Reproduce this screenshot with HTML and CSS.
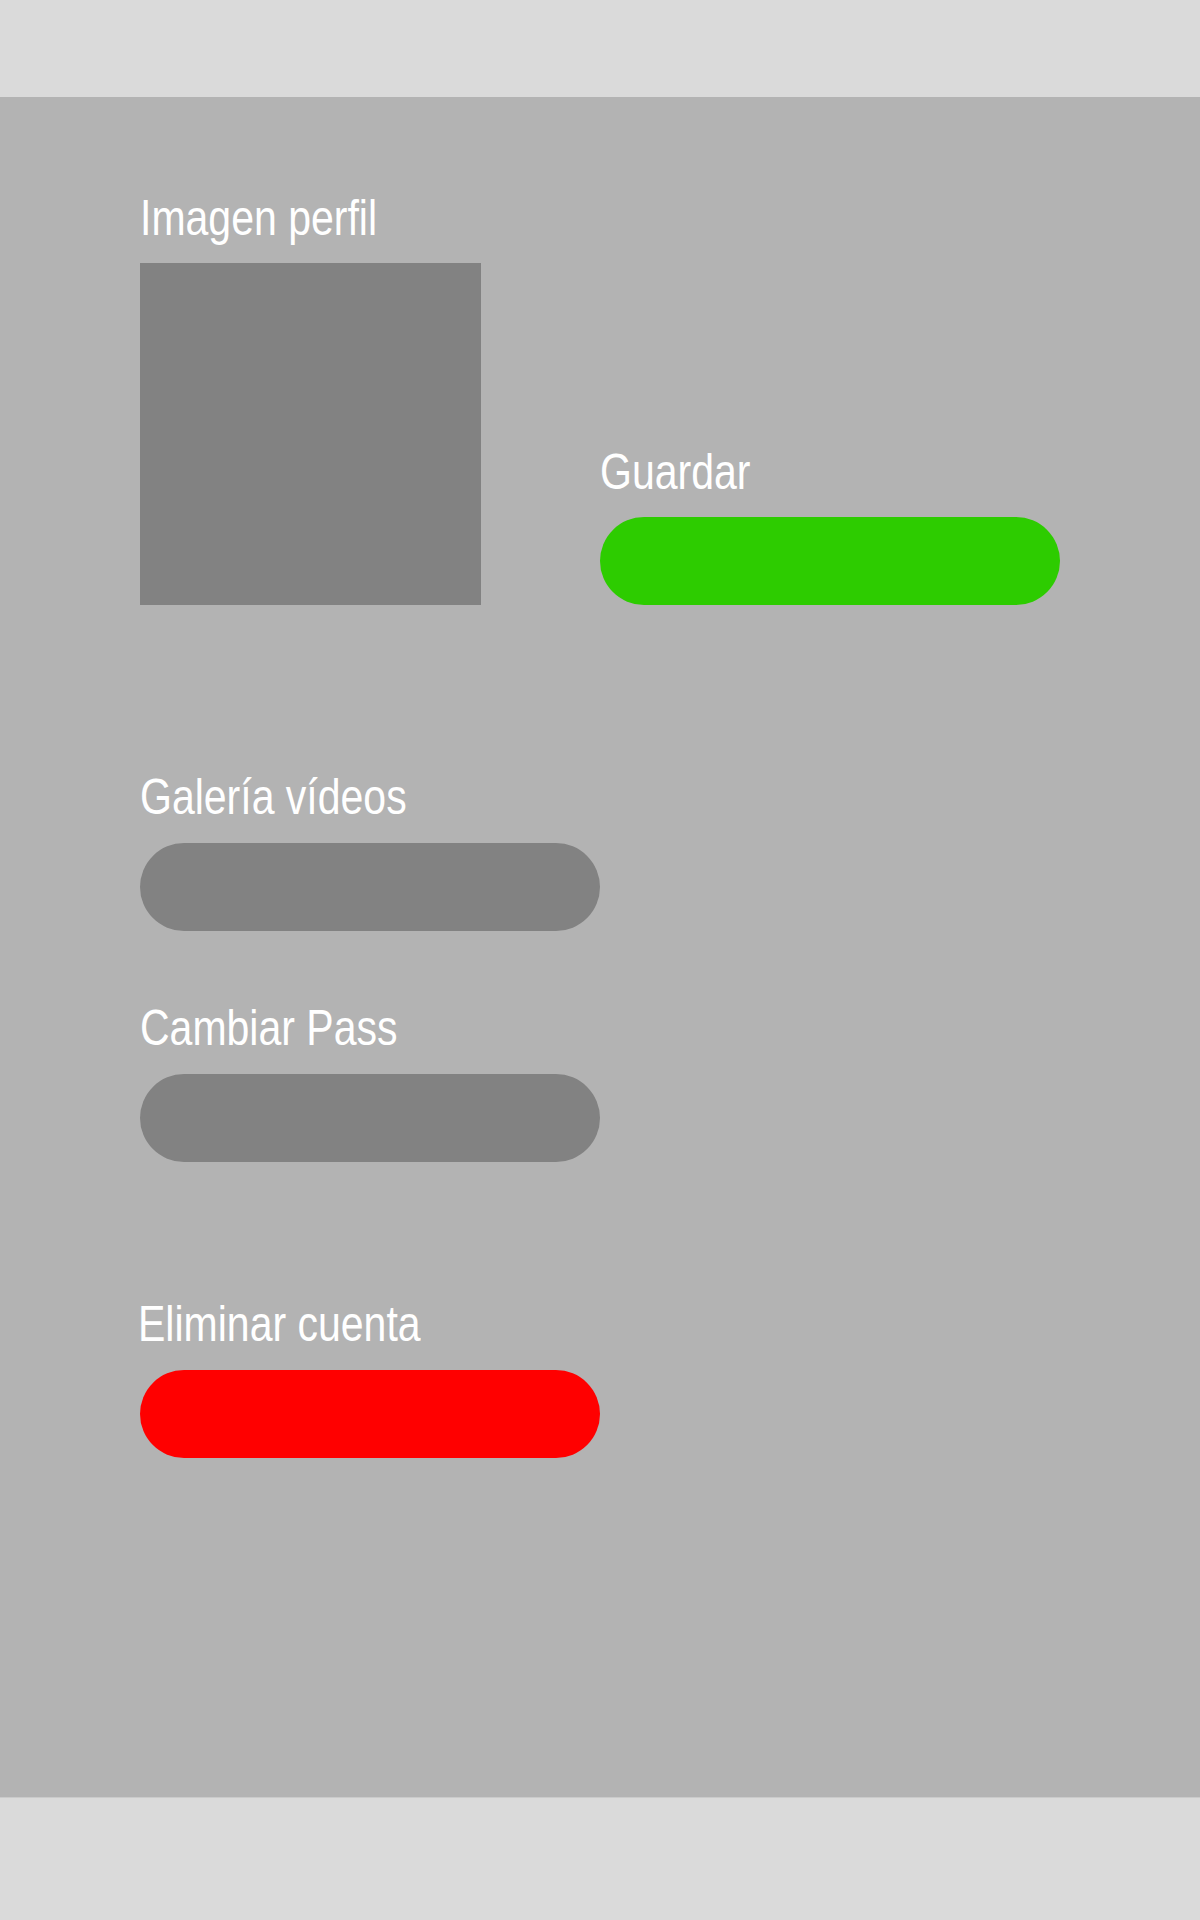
FILE: index.html
```html
<!DOCTYPE html>
<html lang="es">
<head>
<meta charset="utf-8">
<title>Perfil</title>
<link rel="stylesheet" href="styles.css">
</head>
<body>
<header class="topbar"></header>
<main class="content">
  <section class="row-top">
    <div class="field">
      <div class="label">Imagen perfil</div>
      <div class="avatar"></div>
    </div>
    <div class="field">
      <div class="label">Guardar</div>
      <button class="pill pill-save" type="button"></button>
    </div>
  </section>
  <section class="field field-gallery">
    <div class="label">Galería vídeos</div>
    <button class="pill pill-gray" type="button"></button>
  </section>
  <section class="field field-pass">
    <div class="label">Cambiar Pass</div>
    <button class="pill pill-gray" type="button"></button>
  </section>
  <section class="field field-delete">
    <div class="label label-delete">Eliminar cuenta</div>
    <button class="pill pill-delete" type="button"></button>
  </section>
</main>
<footer class="bottombar"></footer>
</body>
</html>
```

FILE: styles.css
```css
html, body {
  margin: 0;
  padding: 0;
}
body {
  width: 1200px;
  height: 1920px;
  display: flex;
  flex-direction: column;
  font-family: "Liberation Sans Narrow", "Arial Narrow", "Liberation Sans", Arial, sans-serif;
  background: #dadada;
}
.topbar {
  height: 97px;
  background: #dadada;
  flex: none;
}
.content {
  height: 1700px;
  box-sizing: border-box;
  background: #b3b3b3;
  padding: 97px 0 0 140px;
  display: flex;
  flex-direction: column;
  flex: none;
}
.bottombar {
  flex: 1;
  background: #dadada;
  border-top: 1px solid #cacaca;
}
.row-top {
  display: flex;
  align-items: flex-end;
  gap: 119px;
}
.field {
  display: flex;
  flex-direction: column;
  align-items: flex-start;
}
.label {
  font-size: 50px;
  line-height: 48px;
  color: #ffffff;
  margin-bottom: 21px;
  white-space: nowrap;
  transform: scaleX(0.82);
  transform-origin: left center;
}
.label-delete {
  margin-left: -2px;
}
.avatar {
  width: 341px;
  height: 342px;
  background: #828282;
}
.pill {
  display: block;
  width: 460px;
  height: 88px;
  border: 0;
  padding: 0;
  border-radius: 44px;
  cursor: pointer;
}
.pill-save {
  background: #2dcc00;
}
.pill-gray {
  background: #828282;
}
.pill-delete {
  background: #ff0000;
}
.field-gallery {
  margin-top: 168px;
}
.field-gallery .label,
.field-pass .label,
.field-delete .label {
  margin-bottom: 22px;
}
.field-pass {
  margin-top: 73px;
}
.field-delete {
  margin-top: 138px;
}
```
